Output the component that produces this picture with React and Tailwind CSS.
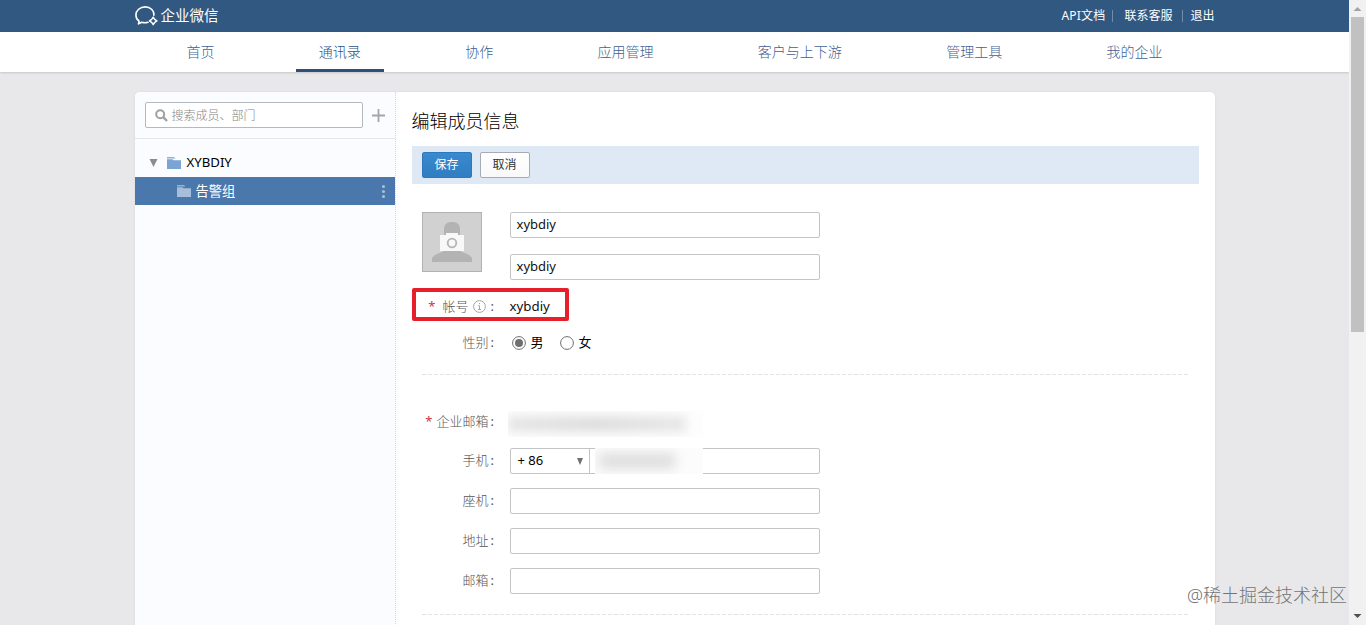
import { useState } from 'react';
import clsx from 'clsx';

const navItems = ['首页', '通讯录', '协作', '应用管理', '客户与上下游', '管理工具', '我的企业']

function Logo() {
  return (
    <div className="flex items-center">
      <svg width="23" height="20" viewBox="0 0 23 20" fill="none" stroke="#fff" strokeWidth="1.6">
        <path d="M18.900 9.200C19.300 4.500 15.300 .9 10.200 .9C5 .9 .9 4.500 .9 8.900C.9 11.500 2.100 13.700 4.100 15.100L3.500 17.900L6.700 16.200C8.800 16.900 11 16.900 13 16.200" strokeLinecap="round" strokeLinejoin="round" />
        <path d="M18.200 11.200L19.700 13.400L21.900 14.900L19.700 16.400L18.200 18.600L16.700 16.400L14.500 14.900L16.700 13.400Z" strokeWidth="1.500" strokeLinejoin="round" />
      </svg>
      <span className="-mt-[3px] ml-[3px] text-[14.500px] leading-5">企业微信</span>
    </div>
  )
}

function TopBar() {
  return (
    <div className="h-8 bg-[#315881] text-white">
      <div className="mx-auto flex h-8 w-[1080px] items-center justify-between">
        <Logo />
        <div className="flex items-center text-xs">
          <a className="tracking-[0.2px]">API文档</a>
          <i className="ml-[7px] mr-[11px] h-3 w-px bg-[#6f8cab]" />
          <a>联系客服</a>
          <i className="ml-[10px] mr-[7px] h-3 w-px bg-[#6f8cab]" />
          <a>退出</a>
        </div>
      </div>
    </div>
  )
}

function Nav() {
  const [active, setActive] = useState(1)
  return (
    <div className="h-10 bg-white shadow-[0_1px_2px_rgba(0,0,0,0.15)]">
      <div className="mx-auto flex h-10 w-[1080px] justify-between pl-[29px] pr-[29px]">
        {navItems.map((t, i) => (
          <a
            key={t}
            onClick={() => setActive(i)}
            className={clsx('h-10 border-b-[3px] px-[23px] text-sm font-light leading-10',
              i === active ? 'border-[#2e5078] text-[#2e5383]' : 'border-transparent text-[#3f5f94]')}>
            {t}
          </a>
        ))}
      </div>
    </div>
  )
}

function Folder({ color }) {
  return (
    <svg width="14" height="12" viewBox="0 0 14 12" fill={color}>
      <path d="M0 0H7L8.500 1.500H0Z" opacity=".85" />
      <path d="M0 2.300H5.500L6.500 3.300H14V12H0Z" />
    </svg>
  )
}

function Sidebar() {
  return (
    <div className="w-[261px] border-r border-dotted border-[#d5dae0] bg-[#fafcff]">
      <div className="flex h-[47px] items-center border-b border-[#e3e6ea] pl-[10px]">
        <div className="flex h-[26px] w-[218px] items-center rounded-[2px] border border-[#b4b9be] bg-white pl-[9px] text-xs font-light text-[#858585]">
          <svg width="13" height="13" viewBox="0 0 13 13" fill="none" stroke="#a0a0a0" strokeWidth="2">
            <circle cx="5.200" cy="5.200" r="4" />
            <path d="M8.200 8.200L12 12" strokeWidth="2.400" />
          </svg>
          <span className="ml-1 pt-px">搜索成员、部门</span>
        </div>
        <svg className="ml-[9px]" width="13" height="13" viewBox="0 0 13 13" stroke="#a3a5a7" strokeWidth="1.800">
          <path d="M6.500 0V13M0 6.500H13" />
        </svg>
      </div>
      <div className="pt-[10px] text-[13px]">
        <div className="flex h-7 items-center pl-[14px]">
          <svg width="9" height="8" viewBox="0 0 9 8" fill="#8a8d90"><path d="M.5 0H8.500L4.500 8Z" /></svg>
          <span className="ml-[9px]"><Folder color="#7ba3d3" /></span>
          <span className="ml-[6px] text-[13.200px] text-black">XYBDIY</span>
        </div>
        <div className="flex h-7 items-center bg-[#4a77ac] pl-[42px] text-white">
          <Folder color="#a7bedb" />
          <span className="ml-[5px] pt-[2px] text-[13.300px]">告警组</span>
          <div className="ml-auto mr-[10px] flex flex-col gap-[2px]">
            <i className="h-[3px] w-[3px] rounded-full bg-[#a9c0dc]" />
            <i className="h-[3px] w-[3px] rounded-full bg-[#a9c0dc]" />
            <i className="h-[3px] w-[3px] rounded-full bg-[#a9c0dc]" />
          </div>
        </div>
      </div>
    </div>
  )
}

function Label({ children, required }) {
  return (
    <div className="flex w-[83px] shrink-0 items-center justify-end text-[13px] font-light text-[#555]">
      {required && <span className="mr-1 font-normal text-[#d0353b]">*</span>}
      {children}<span className="w-[6px] pl-[2px] font-normal">:</span>
    </div>
  )
}

function Input({ value }) {
  return (
    <div className="h-[26px] w-[310px] rounded-[2px] border border-[#c2c5c7] bg-white px-[6px] text-[13px] leading-[23px] text-[#111]">{value}</div>
  )
}

function Avatar() {
  return (
    <svg width="60" height="60" viewBox="0 0 60 60">
      <rect x=".5" y=".5" width="59" height="59" fill="#d1d1d1" stroke="#b2b2b2" />
      <path d="M22 26V17C22 12.500 25 10 30 10S38 12.500 38 17V26Z" fill="#b3b3b3" />
      <path d="M10 50V46Q11 44 15 42L22 39H38L45 42Q49 44 50 46V50Z" fill="#b3b3b3" />
      <path d="M18 23H24V21H36V23H42V39H18Z" fill="#f8f8f8" />
      <circle cx="30" cy="31" r="4.300" fill="none" stroke="#b5b5b5" strokeWidth="1.800" />
    </svg>
  )
}

function Radio({ checked, label }) {
  return (
    <span className="flex items-center">
      <svg width="14" height="14" viewBox="0 0 14 14">
        <circle cx="7" cy="7" r="6.400" fill="#fff" stroke="#6e6e6e" />
        {checked && <circle cx="7" cy="7" r="4" fill="#6e6e6e" />}
      </svg>
      <span className="ml-[5px]">{label}</span>
    </span>
  )
}

function Divider({ className }) {
  return (
    <svg className={clsx('ml-[10px] block', className)} width="768" height="1">
      <path d="M0 .5H768" stroke="#e2e2e2" strokeDasharray="4 2" />
    </svg>
  )
}

function MemberForm() {
  return (
    <div className="flex-1 pl-4 pr-4">
      <h2 className="mt-[15px] text-lg font-light leading-7 text-black">编辑成员信息</h2>
      <div className="mt-[11px] flex h-[38px] items-center gap-2 bg-[#dfe8f5] pl-[10px] text-xs">
        <button className="h-[26px] w-[50px] rounded-[2px] border border-[#2f78bd] bg-linear-to-b from-[#3a8ad0] to-[#307dbf] text-white">保存</button>
        <button className="h-[26px] w-[50px] rounded-[2px] border border-[#a5acb4] bg-linear-to-b from-white to-[#f9f9f9] text-[#333]">取消</button>
      </div>

      <div className="mt-7 flex pl-[10px]">
        <Avatar />
        <div className="ml-7 flex flex-col gap-4">
          <Input value="xybdiy" />
          <Input value="xybdiy" />
        </div>
      </div>

      <div className="mt-2 flex h-[33px] w-[157px] items-center rounded-[2px] border-4 border-[#e61f2b] pt-1 text-[13px]">
        <div className="flex w-[79px] items-center justify-end font-light text-[#555]">
          <span className="mr-[7px] font-normal text-[#d0353b]">*</span>
          帐号
          <svg className="ml-1" width="13" height="13" viewBox="0 0 13 13" fill="none" stroke="#a5a5a5">
            <circle cx="6.500" cy="6.500" r="5.900" />
            <path d="M6.500 3V4.200M5.300 5.700H6.500V9.500M5 9.500H8" />
          </svg>
          <span className="w-[9px] pl-[5px] font-normal">:</span>
        </div>
        <span className="ml-[15px] text-[13.300px] text-[#111]">xybdiy</span>
      </div>
      <div className="mt-[9px] flex h-[26px] items-center text-[13px] text-black">
        <Label>性别</Label>
        <div className="ml-[17px] flex gap-4">
          <Radio checked label="男" />
          <Radio label="女" />
        </div>
      </div>
      <Divider className="mt-[18px]" />

      <div className="mt-[34px] flex h-[26px] items-center">
        <Label required>企业邮箱</Label>
        <div className="ml-[13px] mt-1 h-[26px] w-[195px] overflow-hidden bg-[#fdfdfd]">
          <div className="mt-[5px] h-4 w-[178px] bg-linear-to-r from-[#e6e6e6] via-[#dedede] to-[#e8e8e8] blur-[5px]" />
        </div>
      </div>
      <div className="mt-[13px] flex flex-col gap-[14px]">
        <div className="flex h-[26px] items-center">
          <Label>手机</Label>
          <div className="ml-[15px] flex h-[26px] w-[310px] rounded-[2px] border border-[#c2c5c7] text-[13px] text-black">
            <div className="flex w-[79px] items-center justify-between border-r border-[#c2c5c7] pl-[7px] pr-[6px]">
              <span>+ 86</span>
              <svg width="6" height="7" viewBox="0 0 6 7" fill="#707070"><path d="M0 0H6L3 7Z" /></svg>
            </div>
            <div className="-my-px ml-[5px] h-[26px] w-[108px] overflow-hidden bg-[#fcfcfc]">
              <div className="mt-[5px] ml-1 h-4 w-[76px] bg-[#dedede] blur-[6px]" />
            </div>
          </div>
        </div>
        {['座机', '地址', '邮箱'].map((t) => (
          <div key={t} className="flex h-[26px] items-center">
            <Label>{t}</Label>
            <div className="ml-[15px]"><Input /></div>
          </div>
        ))}
      </div>
      <Divider className="mt-5" />
    </div>
  )
}

function Scrollbar() {
  return (
    <div className="flex h-[625px] w-[17px] flex-col items-center bg-[#f1f1f1]">
      <svg className="shrink-0" width="17" height="17" viewBox="0 0 17 17" fill="#a3a3a3"><path d="M4.500 11L8.500 7L12.500 11Z" /></svg>
      <div className="h-[315px] w-[13px] bg-[#c1c1c1]" />
      <svg className="mt-auto shrink-0" width="17" height="17" viewBox="0 0 17 17" fill="#505050"><path d="M4.500 6L8.500 10L12.500 6Z" /></svg>
    </div>
  )
}

export default function App() {
  return (
    <div className="relative flex h-[625px] w-[1366px] overflow-hidden bg-[#e8e8ea] font-['Noto_Sans','Noto_Sans_CJK_SC',sans-serif]">
      <div className="w-[1349px]">
        <TopBar />
        <Nav />
        <div className="mx-auto mt-5 flex h-[560px] w-[1080px] overflow-hidden rounded-[5px] bg-white shadow-[0_0_3px_rgba(0,0,0,0.06)]">
          <Sidebar />
          <MemberForm />
        </div>
      </div>
      <Scrollbar />
      <div className="absolute bottom-4 right-[19px] text-lg font-light leading-7 text-[#747474]">@稀土掘金技术社区</div>
    </div>
  )
}
